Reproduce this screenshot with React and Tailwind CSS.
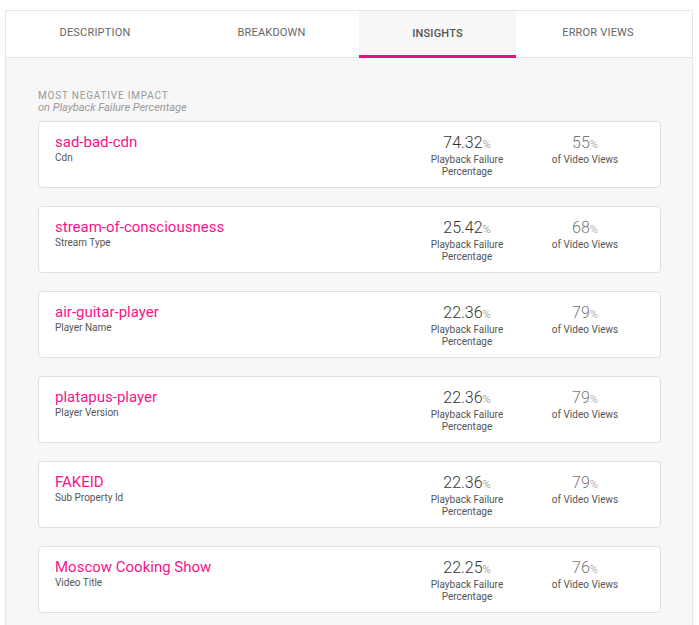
import React from "react";

const tabs = [
  { name: "DESCRIPTION", w: "w-[178px]" },
  { name: "BREAKDOWN", w: "w-[175px]" },
  { name: "INSIGHTS", w: "w-[157px]", active: true },
  { name: "ERROR VIEWS", w: "w-[164px]" },
];

const insights = [
  { id: 1, value: "sad-bad-cdn", label: "Cdn", pct: "74.32", views: "55" },
  { id: 2, value: "stream-of-consciousness", label: "Stream Type", pct: "25.42", views: "68" },
  { id: 3, value: "air-guitar-player", label: "Player Name", pct: "22.36", views: "79" },
  { id: 4, value: "platapus-player", label: "Player Version", pct: "22.36", views: "79" },
  { id: 5, value: "FAKEID", label: "Sub Property Id", pct: "22.36", views: "79" },
  { id: 6, value: "Moscow Cooking Show", label: "Video Title", pct: "22.25", views: "76" },
];

function App() {
  return (
    <div className="w-[699px] h-[625px] overflow-hidden bg-white pt-[10px] pl-[5px] pr-[6px] font-['Roboto',sans-serif]">
      <div className="h-full border-l border-t border-r border-[#e6e6e6] bg-[#f7f7f7]">
        <div className="flex h-[47px] bg-white border-b border-[#e3e3e3]">
          {tabs.map((t) => (
            <div
              key={t.name}
              className={`${t.w} relative flex items-center justify-center text-[11px] tracking-[0.2px] ${
                t.active ? "bg-[#f7f7f7] font-medium text-[#555]" : "text-[#666]"
              }`}
            >
              <span className={t.active ? "mt-[1px]" : "mt-[-1px]"}>{t.name}</span>
              {t.active && <div className="absolute left-0 right-0 bottom-[-1px] h-[3px] bg-[#f50a85]"></div>}
            </div>
          ))}
          <div className="flex-1"></div>
        </div>

        <div className="pl-[32px] pr-[31px] pt-[32px]">
          <p className="text-[10px] leading-[12px] tracking-[0.8px] text-[#999]">MOST NEGATIVE IMPACT</p>
          <p className="text-[11px] leading-[11px] italic text-[#999]">on Playback Failure Percentage</p>

          <div className="mt-[8px] flex flex-col gap-[18px]">
            {insights.map((item) => (
              <div
                key={item.id}
                className="h-[67px] bg-white border border-[#e0e0e0] rounded-[4px] flex pl-[16px] pt-[12px]"
              >
                <div className="flex-1">
                  <p className="text-[15px] leading-[17px] text-[#f5158b]">{item.value}</p>
                  <p className="text-[10px] leading-[12px] text-[#555] mt-[1px]">{item.label}</p>
                </div>
                <div className="w-[100px] text-center">
                  <p className="text-[16px] leading-[17px] font-light text-[#333]">
                    {item.pct}
                    <span className="text-[11px] text-[#888]">%</span>
                  </p>
                  <p className="text-[10px] leading-[12px] text-[#555] mt-[1px]">
                    Playback Failure
                    <br />
                    Percentage
                  </p>
                </div>
                <div className="w-[120px] ml-[8px] mr-[15px] text-center">
                  <p className="text-[16px] leading-[17px] font-light text-[#777]">
                    {item.views}
                    <span className="text-[11px] text-[#999]">%</span>
                  </p>
                  <p className="text-[10px] leading-[12px] text-[#555] mt-[1px]">of Video Views</p>
                </div>
              </div>
            ))}
          </div>
        </div>
      </div>
    </div>
  );
}

export default App;
